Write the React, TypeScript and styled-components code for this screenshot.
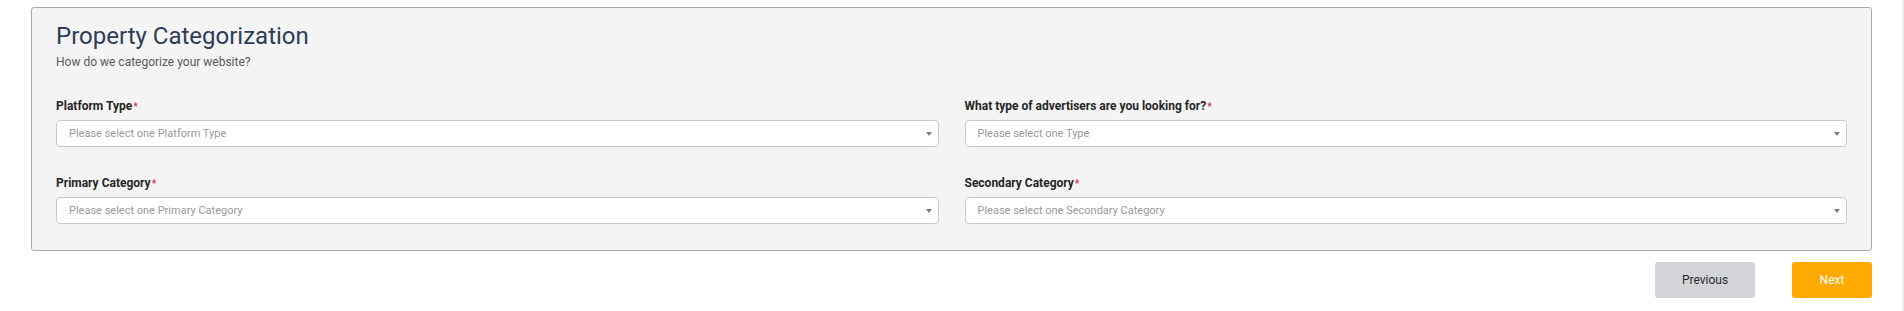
import React from "react";
import styled, { createGlobalStyle } from "styled-components";

const GlobalStyle = createGlobalStyle`
  html, body {
    margin: 0;
    padding: 0;
    background: #ffffff;
  }
  body {
    font-family: Roboto, "Liberation Sans", Arial, sans-serif;
  }
`;

const Page = styled.div`
  box-sizing: border-box;
  width: 1904px;
  height: 311px;
  padding: 7px 30px 0 31px;
  border-right: 2px solid #ececec;
`;

const Card = styled.section`
  box-sizing: border-box;
  width: 1841px;
  background: #f4f4f4;
  border: 1px solid #a9a9a9;
  border-radius: 3px;
  padding: 14px 24px 26px 24px;
`;

const Title = styled.h2`
  margin: 0;
  font-size: 24px;
  font-weight: 400;
  line-height: 28px;
  color: #2e3d57;
`;

const Subtitle = styled.p`
  margin: 5px 0 0 0;
  font-size: 12px;
  line-height: 14px;
  color: #5a5a5a;
`;

const Grid = styled.div`
  display: grid;
  grid-template-columns: 1fr 1fr;
  column-gap: 26px;
  row-gap: 29px;
  margin-top: 30px;
`;

const Field = styled.div`
  display: flex;
  flex-direction: column;
  gap: 6px;
`;

const Label = styled.label`
  font-size: 12px;
  font-weight: 700;
  line-height: 14px;
  color: #262626;
`;

const Required = styled.span`
  color: #e0334a;
  font-size: 10px;
  margin-left: 1px;
`;

const SelectBox = styled.div`
  box-sizing: border-box;
  display: flex;
  align-items: center;
  justify-content: space-between;
  height: 27px;
  padding: 0 6px 0 12px;
  background: #ffffff;
  border: 1px solid #c9c9c9;
  border-radius: 4px;
  font-size: 11px;
  color: #9a9a9a;
`;

const Caret = styled.span`
  width: 0;
  height: 0;
  border-left: 3px solid transparent;
  border-right: 3px solid transparent;
  border-top: 4px solid #7d7d7d;
`;

const Actions = styled.div`
  display: flex;
  justify-content: flex-end;
  gap: 37px;
  width: 1841px;
  margin-top: 11px;
`;

const Button = styled.button<{ $primary?: boolean; $w: number }>`
  width: ${(p) => p.$w}px;
  height: 36px;
  border: none;
  border-radius: 3px;
  font-family: Roboto, "Liberation Sans", Arial, sans-serif;
  font-size: 12px;
  background: ${(p) => (p.$primary ? "#ffaa00" : "#d3d4d8")};
  color: ${(p) => (p.$primary ? "#ffffff" : "#2a2a2a")};
  cursor: pointer;
`;

const fields = [
  { label: "Platform Type", placeholder: "Please select one Platform Type" },
  { label: "What type of advertisers are you looking for?", placeholder: "Please select one Type" },
  { label: "Primary Category", placeholder: "Please select one Primary Category" },
  { label: "Secondary Category", placeholder: "Please select one Secondary Category" },
];

export default function App() {
  return (
    <>
      <GlobalStyle />
      <Page>
        <Card>
          <Title>Property Categorization</Title>
          <Subtitle>How do we categorize your website?</Subtitle>
          <Grid>
            {fields.map((f) => (
              <Field key={f.label}>
                <Label>
                  {f.label}
                  <Required>*</Required>
                </Label>
                <SelectBox>
                  <span>{f.placeholder}</span>
                  <Caret />
                </SelectBox>
              </Field>
            ))}
          </Grid>
        </Card>
        <Actions>
          <Button $w={100}>Previous</Button>
          <Button $w={80} $primary>
            Next
          </Button>
        </Actions>
      </Page>
    </>
  );
}
